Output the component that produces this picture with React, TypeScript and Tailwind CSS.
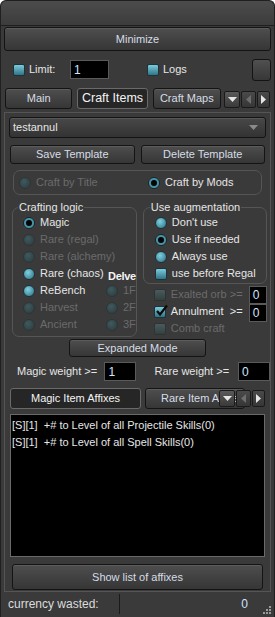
import React from "react";

const font = { fontFamily: '"Liberation Sans", Arial, sans-serif' };

function Btn({ children, className = "", active = false }: { children?: React.ReactNode; className?: string; active?: boolean }) {
  return (
    <div
      className={
        "flex items-center justify-center overflow-hidden rounded-[3px] border leading-none " +
        (active
          ? "border-[#6a6a6a] bg-[#262626] text-[#f4f4f4] "
          : "border-[#141414] bg-linear-to-b from-[#4e4e4e] to-[#363636] text-[#d6dde6] shadow-[inset_0_1px_0_#5c5c5c] ") +
        className
      }
    >
      {children}
    </div>
  );
}

function Radio({ checked = false, disabled = false }: { checked?: boolean; disabled?: boolean }) {
  return (
    <span
      className={
        "inline-flex h-[12px] w-[12px] shrink-0 items-center justify-center rounded-full border " +
        (disabled
          ? "border-[#2b3638] bg-radial-[at_40%_35%] from-[#40595d] to-[#2b3a3d]"
          : checked
          ? "border-[#16272b] bg-radial from-[#2a6d80] to-[#5fb3c6]"
          : "border-[#1d3338] bg-radial-[at_40%_35%] from-[#7fd0e0] to-[#2a6d80]")
      }
    >
      {checked && <span className="h-[6px] w-[6px] rounded-full bg-[#050505]" />}
    </span>
  );
}

function Check({ checked = false, disabled = false }: { checked?: boolean; disabled?: boolean }) {
  return (
    <span
      className={
        "relative inline-flex h-[12px] w-[12px] shrink-0 items-center justify-center rounded-[2px] border " +
        (disabled
          ? "border-[#2c3436] bg-linear-to-b from-[#4a5b5e] to-[#34403f]"
          : "border-[#1d3338] bg-linear-to-b from-[#7ccbdc] to-[#2f7588]")
      }
    >
      {checked && (
        <svg width="13" height="13" viewBox="0 0 13 13" className="absolute -top-[3px] left-[0px]">
          <path d="M2 7 L5 10.5 L12 1.5" fill="none" stroke="#0a0a0a" strokeWidth="2.2" />
        </svg>
      )}
    </span>
  );
}

function Field({ value, className = "" }: { value: string; className?: string }) {
  return (
    <div className={"flex shrink-0 items-center border border-[#5a5a5a] bg-black pl-[3px] text-[12px] leading-none text-[#cfe6ff] " + className}>
      {value}
    </div>
  );
}

function Arrows() {
  return (
    <div className="flex h-[17px] gap-[1px]">
      <div className="flex w-[16px] items-center justify-center rounded-[2px] border border-[#1a1a1a] bg-linear-to-b from-[#5a5a5a] to-[#3a3a3a]">
        <svg width="9" height="5" viewBox="0 0 9 5"><path d="M0 0 H9 L4.5 5 Z" fill="#e6e6e6" /></svg>
      </div>
      <div className="flex w-[15px] items-center justify-center rounded-[2px] border border-[#1a1a1a] bg-linear-to-b from-[#4a4a4a] to-[#363636]">
        <svg width="5" height="9" viewBox="0 0 5 9"><path d="M5 0 V9 L0 4.5 Z" fill="#6e6e6e" /></svg>
      </div>
      <div className="flex w-[13px] items-center justify-center rounded-[2px] border border-[#1a1a1a] bg-linear-to-b from-[#4a4a4a] to-[#363636]">
        <svg width="5" height="9" viewBox="0 0 5 9"><path d="M0 0 V9 L5 4.5 Z" fill="#e6e6e6" /></svg>
      </div>
    </div>
  );
}

function Opt({ label, checked, disabled, box }: { label: string; checked?: boolean; disabled?: boolean; box?: boolean }) {
  return (
    <div className="flex h-[17px] items-center gap-[5px] leading-none">
      {box ? <Check checked={checked} disabled={disabled} /> : <Radio checked={checked} disabled={disabled} />}
      <span className={disabled ? "text-[#6b6b6b]" : "text-[#e6e6e6]"}>{label}</span>
    </div>
  );
}

export default function App() {
  return (
    <div style={font} className="relative flex h-[617px] w-[275px] flex-col overflow-hidden whitespace-nowrap rounded-t-[6px] border-x border-t border-[#202020] bg-[#3a3a3a] text-[11px] text-[#e6e6e6]">
      {/* title strip */}
      <div className="h-[25px] shrink-0 rounded-t-[6px] border-b border-[#1e1e1e] bg-linear-to-b from-[#4c4c4c] to-[#3c3c3c]" />

      {/* Minimize */}
      <Btn className="mx-[3px] mt-[1px] h-[24px] shrink-0 text-[#c9d6e6]">Minimize</Btn>

      {/* Limit / Logs */}
      <div className="mt-[7px] flex h-[23px] shrink-0 items-center pl-[12px] pr-[3px] leading-none">
        <Check />
        <span className="ml-[4px] w-[41px]">Limit:</span>
        <Field value="1" className="h-[19px] w-[39px]" />
        <span className="ml-[38px] flex"><Check /></span>
        <span className="ml-[4px]">Logs</span>
        <div className="ml-auto h-[22px] w-[19px] rounded-[3px] border border-[#141414] bg-linear-to-b from-[#505050] to-[#373737]" />
      </div>

      {/* tabs */}
      <div className="mt-[7px] flex h-[21px] shrink-0 items-end gap-[5px] px-[4px]">
        <Btn className="h-[21px] w-[68px] text-[#cfcfcf]">Main</Btn>
        <Btn active className="h-[21px] w-[71px] text-[12.5px]">Craft Items</Btn>
        <Btn className="h-[21px] w-[69px] text-[#cfcfcf]">Craft Maps</Btn>
        <div className="mb-[1px] -ml-[2px]"><Arrows /></div>
      </div>

      {/* pane */}
      <div className="mx-[3px] mt-[3px] flex h-[480px] shrink-0 flex-col overflow-hidden border-x border-y border-[#555]">
        {/* dropdown */}
        <div className="mx-[4px] mt-[4px] flex h-[21px] shrink-0 items-center justify-between rounded-[3px] border border-[#141414] bg-linear-to-b from-[#484848] to-[#333] pl-[3px] pr-[7px] shadow-[inset_0_1px_0_#575757]">
          <span>testannul</span>
          <svg width="9" height="5" viewBox="0 0 9 5"><path d="M0 0 H9 L4.5 5 Z" fill="#8a8a8a" /></svg>
        </div>

        <div className="mx-[5px] mt-[7px] flex shrink-0 gap-[6px]">
          <Btn className="h-[19px] flex-1">Save Template</Btn>
          <Btn className="h-[19px] flex-1">Delete Template</Btn>
        </div>

        <div className="mx-[8px] mt-[6px] flex h-[25px] shrink-0 items-center rounded-[7px] border border-[#555] pl-[5px]">
          <div className="w-[129px]"><Opt label="Craft by Title" disabled /></div>
          <Opt label="Craft by Mods" checked />
        </div>

        {/* groups */}
        <div className="mt-[12px] flex shrink-0 gap-[6px] px-[7px]">
          <div className="relative w-[128px] rounded-[7px] border border-[#555] pb-[1px] pl-[10px] pt-[6px]">
            <span className="absolute -top-[6px] left-[5px] bg-[#3a3a3a] px-[1px] leading-none">Crafting logic</span>
            <Opt label="Magic" checked />
            <Opt label="Rare (regal)" disabled />
            <Opt label="Rare (alchemy)" disabled />
            <div className="flex">
              <div className="w-[86px]"><Opt label="Rare (chaos)" /></div>
              <span className="mt-[6px] -ml-[1px] font-bold leading-none tracking-[-0.3px] text-[#f4f4f4]">Delve</span>
            </div>
            {[
              ["ReBench", false, "1F"],
              ["Harvest", true, "2F"],
              ["Ancient", true, "3F"],
            ].map(([l, d, f]) => (
              <div key={l as string} className="flex">
                <div className="w-[83px]"><Opt label={l as string} disabled={d as boolean} /></div>
                <Opt label={f as string} disabled />
              </div>
            ))}
          </div>

          <div className="flex flex-col">
            <div className="relative w-[124px] rounded-[7px] border border-[#555] pb-[1px] pl-[11px] pt-[6px]">
              <span className="absolute -top-[6px] left-[6px] bg-[#3a3a3a] px-[1px] leading-none">Use augmentation</span>
              <Opt label="Don't use" />
              <Opt label="Use if needed" checked />
              <Opt label="Always use" />
              <Opt label="use before Regal" box />
            </div>
            <div className="mt-[2px] flex pl-[11px]">
              <div className="flex w-[95px] flex-col leading-none">
                <div className="flex h-[17px] items-center">
                  <Check disabled />
                  <span className="ml-[5px] w-[59px] text-[#6b6b6b]">Exalted orb</span>
                  <span className="text-[#6b6b6b]">&gt;=</span>
                </div>
                <div className="flex h-[17px] items-center">
                  <Check checked />
                  <span className="ml-[5px] w-[59px]">Annulment</span>
                  <span>&gt;=</span>
                </div>
                <div className="flex h-[17px] items-center">
                  <Check disabled />
                  <span className="ml-[5px] text-[#6b6b6b]">Comb craft</span>
                </div>
              </div>
              <div className="flex flex-col">
                <Field value="0" className="h-[18px] w-[18px]" />
                <Field value="0" className="h-[18px] w-[18px]" />
              </div>
            </div>
          </div>
        </div>

        <Btn className="mx-auto mt-[2px] h-[18px] w-[137px] shrink-0">Expanded Mode</Btn>

        <div className="mt-[5px] flex h-[19px] shrink-0 items-center pl-[12px] leading-none">
          <span className="w-[88px]">Magic weight &gt;=</span>
          <Field value="1" className="h-[19px] w-[32px]" />
          <span className="ml-[18px] w-[84px]">Rare weight &gt;=</span>
          <Field value="0" className="h-[19px] w-[32px]" />
        </div>

        <div className="mt-[7px] flex h-[21px] shrink-0 items-center gap-[4px] px-[5px]">
          <Btn active className="h-[21px] w-[131px]">Magic Item Affixes</Btn>
          <div className="relative flex h-[21px] flex-1 items-center">
            <Btn className="h-[21px] w-[100px] justify-start pl-[15px] text-[#cfcfcf]">Rare Item Affixes</Btn>
            <div className="absolute right-0 top-[2px]"><Arrows /></div>
          </div>
        </div>

        <div className="mx-[5px] mt-[5px] h-[143px] shrink-0 border border-[#6a6a6a] bg-black pl-[1px] pt-[2px] leading-[17px] text-[#e6e6e6]">
          <div>[S][1]&nbsp; +# to Level of all Projectile Skills(0)</div>
          <div>[S][1]&nbsp; +# to Level of all Spell Skills(0)</div>
        </div>

        <Btn className="mx-[7px] mt-[7px] h-[26px] shrink-0">Show list of affixes</Btn>
      </div>

      {/* status bar */}
      <div className="flex h-[24px] shrink-0 items-center bg-[#3a3a3a] leading-none text-[#dcdcdc]">
        <span className="w-[118px] pl-[7px] text-[12px]">currency wasted:</span>
        <span className="h-[20px] w-px bg-[#1a1a1a]" />
        <span className="ml-auto mr-[26px] text-[12px] text-[#cfe2ff]">0</span>
      </div>
      <svg className="absolute bottom-[3px] right-[3px]" width="9" height="9" viewBox="0 0 9 9">
        {[[7, 1], [4, 4], [7, 4], [1, 7], [4, 7], [7, 7]].map(([x, y]) => (
          <rect key={`${x}-${y}`} x={x} y={y} width="2" height="2" fill="#9a9a9a" />
        ))}
      </svg>
    </div>
  );
}
